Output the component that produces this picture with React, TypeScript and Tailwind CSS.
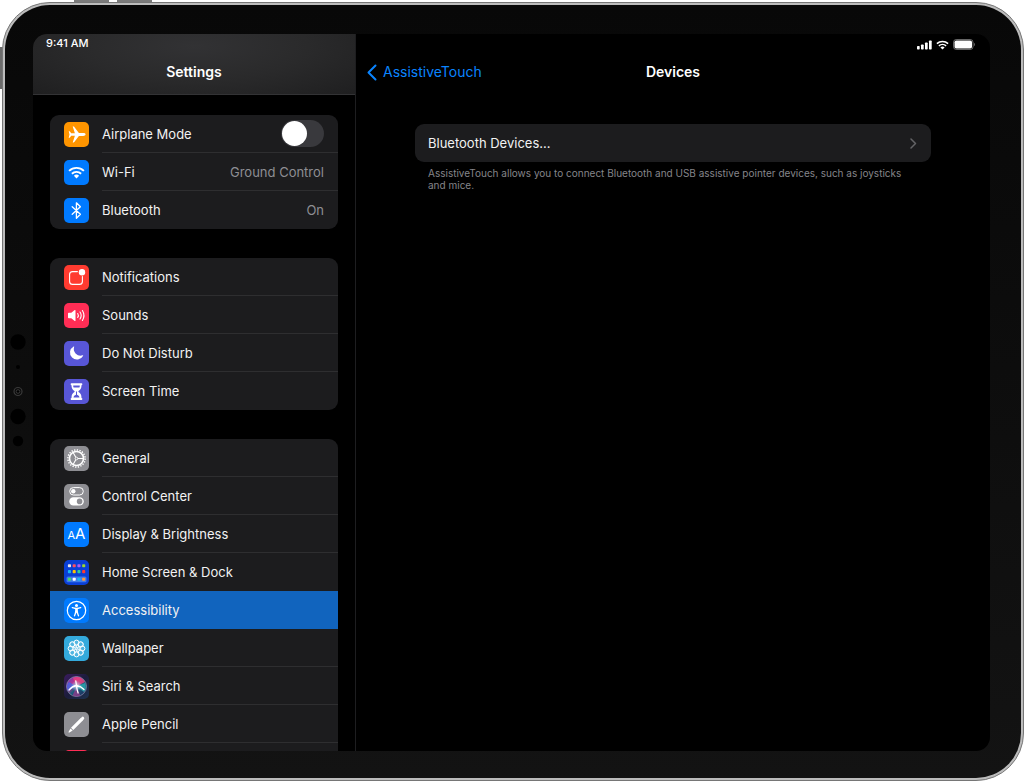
import type { ReactNode } from 'react';

type Item = {
  label: string;
  tile: string;
  icon: ReactNode;
  value?: string;
  toggle?: boolean;
  selected?: boolean;
};

const Glyph = ({ children }: { children: ReactNode }) => (
  <svg viewBox="0 0 25 25" className="w-full h-full" fill="none" stroke="none" aria-hidden="true">
    {children}
  </svg>
);

const AirplaneIcon = () => (
  <Glyph>
    <path
      fill="#fff"
      d="M21.6 12.5c0-.9-1.2-1.4-2.5-1.4h-4.2l-4.6-6.2c-.2-.3-.4-.4-.8-.4h-.8l2.2 6.7H7.2L5.7 9.2h-1l.8 3.3-.8 3.3h1l1.5-2h3.7l-2.2 6.7h.8c.4 0 .6-.1.8-.4l4.6-6.2h4.2c1.3 0 2.5-.5 2.5-1.4z"
    />
  </Glyph>
);

const WifiIcon = () => (
  <Glyph>
    <path stroke="#fff" strokeWidth="1.9" d="M5.1 10.9a10.6 10.6 0 0 1 14.8 0M7.9 13.7a6.6 6.6 0 0 1 9.2 0" />
    <path fill="#fff" d="M12.5 18.4l-2.6-2.7a3.7 3.7 0 0 1 5.2 0z" />
  </Glyph>
);

const BluetoothIcon = () => (
  <Glyph>
    <path
      stroke="#fff"
      strokeWidth="1.3"
      strokeLinejoin="round"
      strokeLinecap="round"
      d="M8.2 8.7l8.2 7.6-4 3.9V4.8l4 3.9-8.2 7.6"
    />
  </Glyph>
);

const NotificationsIcon = () => (
  <Glyph>
    <path
      stroke="#fff"
      strokeWidth="1.1"
      strokeLinecap="round"
      d="M13.4 6.6H8.6c-2 0-3 1-3 3v6.8c0 2 1 3 3 3h6.8c2 0 3-1 3-3v-4.8"
    />
    <circle cx="18" cy="7.3" r="3.2" fill="#fff" />
  </Glyph>
);

const SoundsIcon = () => (
  <Glyph>
    <path fill="#fff" d="M4 10.6c0-.5.3-.8.8-.8h2.5l3.4-2.7c.4-.3.8-.1.8.4v10c0 .5-.4.7-.8.4l-3.4-2.7H4.8c-.5 0-.8-.3-.8-.8z" />
    <path
      stroke="#fff"
      strokeWidth="1.1"
      strokeLinecap="round"
      d="M13.7 10.5a3.6 3.6 0 0 1 0 4M16 9a6.2 6.2 0 0 1 0 7M18.4 7.5a9.4 9.4 0 0 1 0 10"
    />
  </Glyph>
);

const MoonIcon = () => (
  <Glyph>
    <path fill="#fff" d="M10.2 5.8a.4.4 0 0 0-.5-.4 7 7 0 1 0 9.5 9.4.4.4 0 0 0-.5-.5A6.7 6.7 0 0 1 10.2 5.8z" />
  </Glyph>
);

const HourglassIcon = () => (
  <Glyph>
    <path
      fill="#fff"
      d="M7.4 4.2h10.2c.5 0 .7.2.7.7v.7c0 .4-.3.6-.8.6 0 3-1 4.5-2.9 5.8-.4.3-.4.8 0 1.1 1.9 1.2 2.9 2.8 2.9 5.8.5 0 .8.2.8.6v.7c0 .5-.2.7-.7.7H7.4c-.5 0-.7-.2-.7-.7v-.7c0-.4.3-.6.8-.6 0-3 1-4.6 2.9-5.8.4-.3.4-.8 0-1.1-1.9-1.3-2.9-2.8-2.9-5.8-.5 0-.8-.2-.8-.6v-.7c0-.5.2-.7.7-.7z"
    />
    <path fill="#5856d6" d="M9.2 6.4h6.6c0 .8-.1 1.500-.4 2.100H9.600c-.3-.6-.4-1.300-.4-2.100zM12 12.500h1v3.300c1.500.5 2.200 1.400 2.500 2.600h-6c.3-1.200 1-2.100 2.500-2.600z" />
  </Glyph>
);

const GearIcon = () => (
  <Glyph>
    <circle cx="12.5" cy="12.5" r="8.6" stroke="#fff" strokeWidth="1.5" strokeDasharray="1.351 1.351" />
    <circle cx="12.5" cy="12.5" r="7" stroke="#fff" strokeWidth="1.6" />
    <path stroke="#fff" strokeWidth="1.1" d="M13.800 12.500h5.500M11.800 11.300L9.100 6.600M11.800 13.700l-2.700 4.700" />
    <circle cx="12.5" cy="12.5" r="1.3" stroke="#fff" strokeWidth=".9" />
  </Glyph>
);

const ControlCenterIcon = () => (
  <Glyph>
    <rect x="5.700" y="3.600" width="13.600" height="7.400" rx="3.700" stroke="#fff" strokeWidth="1" />
    <circle cx="9.300" cy="7.300" r="2.200" fill="#fff" />
    <rect x="5.200" y="13.200" width="14.600" height="8.400" rx="4.200" fill="#fff" />
    <circle cx="15.600" cy="17.400" r="2.800" fill="#8e8e93" />
  </Glyph>
);

const DisplayIcon = () => (
  <span className="flex w-full h-full items-baseline justify-center leading-6 text-white" aria-hidden="true">
    <span className="text-[11px]">A</span>
    <span className="text-[15px]">A</span>
  </span>
);

const appDots = [
  ['#e4e4ea', '#ff4f5e', '#b15cf5', '#9bd62f'],
  ['#19b5f5', '#ffc400', '#2ed09a', '#ff3b30'],
  ['#4cd964', '#ffffff', '#19b5f5', '#ff9a3c'],
];
const dotRows = [5.7, 11.6, 19.2];

const HomeScreenIcon = () => (
  <Glyph>
    <rect x="2.500" y="16.400" width="20" height="5.800" rx="1.500" fill="#3f7be8" />
    {appDots.map((row, r) =>
      row.map((color, c) => (
        <rect key={`${r}-${c}`} x={3.9 + c * 4.75} y={dotRows[r] - 1.5} width="3.100" height="3.100" rx=".8" fill={color} />
      ))
    )}
  </Glyph>
);

const AccessibilityIcon = () => (
  <Glyph>
    <circle cx="12.5" cy="12.5" r="9.2" stroke="#fff" strokeWidth="1.2" />
    <circle cx="12.5" cy="7.6" r="1.5" fill="#fff" />
    <path
      fill="#fff"
      d="M7.7 9.5c.1-.4.4-.5.8-.4 2.7.7 5.3.7 8 0 .4-.1.7 0 .8.4.1.4-.1.6-.5.7l-2.7.7c-.2.1-.3.2-.3.5 0 2.2.4 3.9 1.3 6.2.2.4 0 .7-.3.8-.4.2-.7 0-.9-.4l-1.4-3.6-1.4 3.6c-.2.4-.5.6-.9.4-.3-.1-.5-.4-.3-.8.9-2.300 1.300-4 1.300-6.200 0-.3-.1-.4-.3-.5l-2.700-.7c-.4-.1-.6-.3-.5-.7z"
    />
  </Glyph>
);

const WallpaperIcon = () => (
  <Glyph>
    {[0, 45, 90, 135, 180, 225, 270, 315].map((angle) => (
      <circle
        key={angle}
        cx="12.5"
        cy="6.6"
        r="2.5"
        stroke="#fff"
        strokeWidth="1"
        fill="#fff"
        fillOpacity=".15"
        transform={`rotate(${angle} 12.5 12.5)`}
      />
    ))}
    {[22, 82, 142, 202, 262, 322].map((angle) => (
      <circle key={angle} cx="12.5" cy="10.3" r="1.5" stroke="#fff" strokeWidth=".7" transform={`rotate(${angle} 12.5 12.5)`} />
    ))}
  </Glyph>
);

const SiriIcon = () => (
  <Glyph>
    <defs>
      <radialGradient id="siri-glow">
        <stop offset="0" stopColor="#fff" />
        <stop offset=".25" stopColor="#d9f0ff" stopOpacity=".7" />
        <stop offset="1" stopColor="#7fd4ff" stopOpacity="0" />
      </radialGradient>
      <linearGradient id="siri-orb" x1="0" y1="0" x2="1" y2="1">
        <stop offset="0" stopColor="#6a32b8" />
        <stop offset=".35" stopColor="#b8358f" />
        <stop offset=".55" stopColor="#1c5f7c" />
        <stop offset="1" stopColor="#1b1f55" />
      </linearGradient>
    </defs>
    <circle cx="12.5" cy="12.5" r="10" fill="url(#siri-orb)" stroke="#8f9ab8" strokeWidth=".7" />
    <path fill="#e8417f" fillOpacity=".85" d="M12.5 12.5L9 4c4-2 9-1 12 4z" />
    <path fill="#2cb7b9" fillOpacity=".7" d="M12.5 12.5L21 9c1.5 3 1 7-1 9z" />
    <path fill="#2f6ff0" fillOpacity=".7" d="M12.5 12.5L4 17c-2-4-1-7 1-9z" />
    <path fill="#9d3b90" fillOpacity=".7" d="M12.5 12.5l-4 9c2.5 1.2 6 1.2 8 0z" />
    <circle cx="12.5" cy="12" r="5.5" fill="url(#siri-glow)" />
    <path
      stroke="#fff"
      strokeWidth="1.3"
      strokeLinecap="round"
      d="M12.500 11.500l-.7-4.500M12.500 11.500c-3 .5-5.500 2-7.500 4.500M12.500 11.500c3 .5 5.500 1.800 7.500 4M12.500 11.500c.2 3 .7 5 1.600 7.500"
    />
  </Glyph>
);

const PencilIcon = () => (
  <Glyph>
    <path stroke="#fff" strokeWidth="3" strokeLinecap="round" d="M18.800 6.200l-1.200 1.200" />
    <path fill="#fff" d="M16.500 6.300l2.300 2.200L9.300 18 7 15.800z" />
    <path fill="#fff" d="M6.500 16.400l2.200 2.200-3.200 1.900c-.7.300-1.200-.1-.9-.8z" />
  </Glyph>
);

const groups: Item[][] = [
  [
    { label: 'Airplane Mode', tile: 'bg-[#ff9500]', icon: <AirplaneIcon />, toggle: true },
    { label: 'Wi-Fi', tile: 'bg-[#007aff]', icon: <WifiIcon />, value: 'Ground Control' },
    { label: 'Bluetooth', tile: 'bg-[#007aff]', icon: <BluetoothIcon />, value: 'On' },
  ],
  [
    { label: 'Notifications', tile: 'bg-[#ff3b30]', icon: <NotificationsIcon /> },
    { label: 'Sounds', tile: 'bg-[#ff2d55]', icon: <SoundsIcon /> },
    { label: 'Do Not Disturb', tile: 'bg-[#5856d6]', icon: <MoonIcon /> },
    { label: 'Screen Time', tile: 'bg-[#5856d6]', icon: <HourglassIcon /> },
  ],
  [
    { label: 'General', tile: 'bg-[#8e8e93]', icon: <GearIcon /> },
    { label: 'Control Center', tile: 'bg-[#8e8e93]', icon: <ControlCenterIcon /> },
    { label: 'Display & Brightness', tile: 'bg-[#007aff]', icon: <DisplayIcon /> },
    { label: 'Home Screen & Dock', tile: 'bg-[#0a3fd6]', icon: <HomeScreenIcon /> },
    { label: 'Accessibility', tile: 'bg-[#007aff]', icon: <AccessibilityIcon />, selected: true },
    { label: 'Wallpaper', tile: 'bg-[#34aadc]', icon: <WallpaperIcon /> },
    { label: 'Siri & Search', tile: 'bg-linear-to-br from-[#3a1a5e] via-[#1c1c3c] to-[#1c3350]', icon: <SiriIcon /> },
    { label: 'Apple Pencil', tile: 'bg-[#8e8e93]', icon: <PencilIcon /> },
    { label: '', tile: 'bg-[#ff2d55]', icon: null },
  ],
];

function SettingsRow({ item, divider }: { item: Item; divider: boolean }) {
  const content = (
    <>
      <span className={`w-[25px] h-[25px] shrink-0 rounded-[5px] overflow-hidden ${item.tile}`}>{item.icon}</span>
      <span
        className={`flex flex-1 h-full items-center justify-between border-b pr-[14px] ${
          divider ? 'border-[#2e2e30]' : 'border-transparent'
        }`}
      >
        <span>{item.label}</span>
        {item.value && <span className="text-[#8e8e93]">{item.value}</span>}
        {item.toggle && (
          <input
            type="checkbox"
            role="switch"
            className="appearance-none w-[43px] h-[27px] rounded-full bg-[#39393d] p-px before:block before:w-[25px] before:h-[25px] before:rounded-full before:bg-white checked:bg-[#30d158] checked:before:ml-4"
          />
        )}
      </span>
    </>
  );
  const rowClass = `flex h-[38px] items-center gap-[13px] pl-[14px] ${item.selected ? 'bg-[#1164be]' : ''}`;

  if (item.toggle) return <label className={rowClass}>{content}</label>;
  return (
    <a href="#" className={rowClass} aria-current={item.selected ? 'page' : undefined}>
      {content}
    </a>
  );
}

function StatusIcons() {
  return (
    <div className="flex items-center justify-end gap-1 text-white">
      <svg width="15" height="10" viewBox="0 0 15 10" fill="currentColor" aria-hidden="true">
        <rect x="0" y="6" width="2.700" height="3.500" rx=".7" />
        <rect x="4" y="4.500" width="2.700" height="5" rx=".7" />
        <rect x="8" y="2.500" width="2.700" height="7" rx=".7" />
        <rect x="12" y="0.500" width="2.700" height="9" rx=".7" />
      </svg>
      <svg width="13" height="10" viewBox="0 0 13 10" fill="none" aria-hidden="true">
        <path stroke="currentColor" strokeWidth="1.6" d="M.9 3.600a8.300 8.300 0 0 1 11.200 0M2.900 5.900a5.300 5.300 0 0 1 7.200 0" />
        <path fill="currentColor" d="M6.500 9.600L4.400 7.400a3.100 3.100 0 0 1 4.200 0z" />
      </svg>
      <svg width="22" height="11" viewBox="0 0 22 11" fill="none" aria-hidden="true">
        <rect x=".5" y=".5" width="19.500" height="10" rx="2.800" stroke="#fff" strokeOpacity=".4" />
        <rect x="1.500" y="1.500" width="17.500" height="8" rx="1.800" fill="currentColor" />
        <path fill="#fff" fillOpacity=".5" d="M21 3.800c1 .4 1 3 0 3.400z" />
      </svg>
    </div>
  );
}

function Sidebar() {
  return (
    <aside className="flex w-[323px] shrink-0 flex-col border-r border-[#1e1e20]">
      <header className="h-[61px] shrink-0 border-b border-[#333335] bg-[radial-gradient(ellipse_at_50%_20%,#323234_0%,#2a2a2b_50%,#1f1f20_100%)] text-white">
        <p className="pl-[13px] pt-px text-[11px] leading-4 font-medium">9:41 AM</p>
        <h1 className="mt-[11px] text-center text-[14px] leading-5 font-semibold">Settings</h1>
      </header>
      <nav className="flex min-h-0 flex-1 flex-col gap-[29px] overflow-hidden px-[17px] pt-5">
        {groups.map((group, i) => (
          <div key={i} className="shrink-0 rounded-[9px] bg-[#1c1c1e] overflow-hidden">
            {group.map((item, j) => (
              <SettingsRow
                key={item.tile + item.label}
                item={item}
                divider={j < group.length - 1 && !item.selected && !group[j + 1].selected}
              />
            ))}
          </div>
        ))}
      </nav>
    </aside>
  );
}

function DevicesPane() {
  return (
    <main className="flex-1">
      <div className="pt-[5px] pr-[15px]">
        <StatusIcons />
      </div>
      <div className="mt-3 grid grid-cols-3 items-center text-[14px] leading-5">
        <a href="#" className="flex items-center gap-[6px] pl-[11px] text-[#0a84ff]">
          <svg width="10" height="17" viewBox="0 0 10 17" fill="none" aria-hidden="true">
            <path stroke="currentColor" strokeWidth="2" strokeLinecap="round" strokeLinejoin="round" d="M8.500 1.500l-7 7 7 7" />
          </svg>
          AssistiveTouch
        </a>
        <h2 className="text-center font-semibold text-white">Devices</h2>
      </div>
      <section className="mx-[59px] mt-[42px]">
        <a href="#" className="flex h-[38px] items-center justify-between rounded-[9px] bg-[#1c1c1e] pl-[13px] pr-[14px]">
          Bluetooth Devices...
          <svg width="7" height="11" viewBox="0 0 7 11" fill="none" aria-hidden="true">
            <path stroke="#636366" strokeWidth="1.500" strokeLinecap="round" strokeLinejoin="round" d="M1 1l4.500 4.500L1 10" />
          </svg>
        </a>
        <p className="mt-[5px] px-[13px] text-[10px] leading-3 text-[#85858a]">
          AssistiveTouch allows you to connect Bluetooth and USB assistive pointer devices, such as joysticks and mice.
        </p>
      </section>
    </main>
  );
}

export default function App() {
  return (
    <div className="relative h-screen bg-white pl-[2px] pt-[2px] font-['Inter',sans-serif] text-[13px] leading-5 text-[#f2f2f2]">
      {/* Volume and power buttons */}
      <div className="absolute left-[74px] top-0 h-[3px] w-[35px] bg-[#7b7b7b]" />
      <div className="absolute left-[117px] top-0 h-[3px] w-[35px] bg-[#7b7b7b]" />
      <div className="absolute left-0 top-[47px] h-[42px] w-[3px] bg-[#6b6b6b]" />

      <div className="relative h-full rounded-[48px] border border-[#767676] bg-[#bcbcbc] p-[2px]">
        <div className="relative h-full rounded-[45px] bg-linear-to-b from-[#080808] to-[#131313] pt-[29px] pr-[31px] pb-[27px] pl-7">
          {/* Front camera and sensors */}
          <svg className="absolute left-[5px] top-[329px]" width="16" height="116" viewBox="0 0 16 116" aria-hidden="true">
            <circle cx="8" cy="8" r="7.700" fill="#000" />
            <circle cx="8" cy="33" r="2" fill="#000" />
            <circle cx="8" cy="57.500" r="4" fill="#0c0c0c" stroke="#3a3a3a" strokeWidth="1.200" />
            <circle cx="8" cy="57.500" r="1.800" fill="#000" stroke="#444" strokeWidth=".8" />
            <circle cx="8" cy="82.500" r="7.700" fill="#000" />
            <circle cx="8" cy="107" r="5.200" fill="#000" />
          </svg>
          <div className="flex h-full overflow-hidden rounded-[14px] bg-black">
            <Sidebar />
            <DevicesPane />
          </div>
        </div>
      </div>
    </div>
  );
}
